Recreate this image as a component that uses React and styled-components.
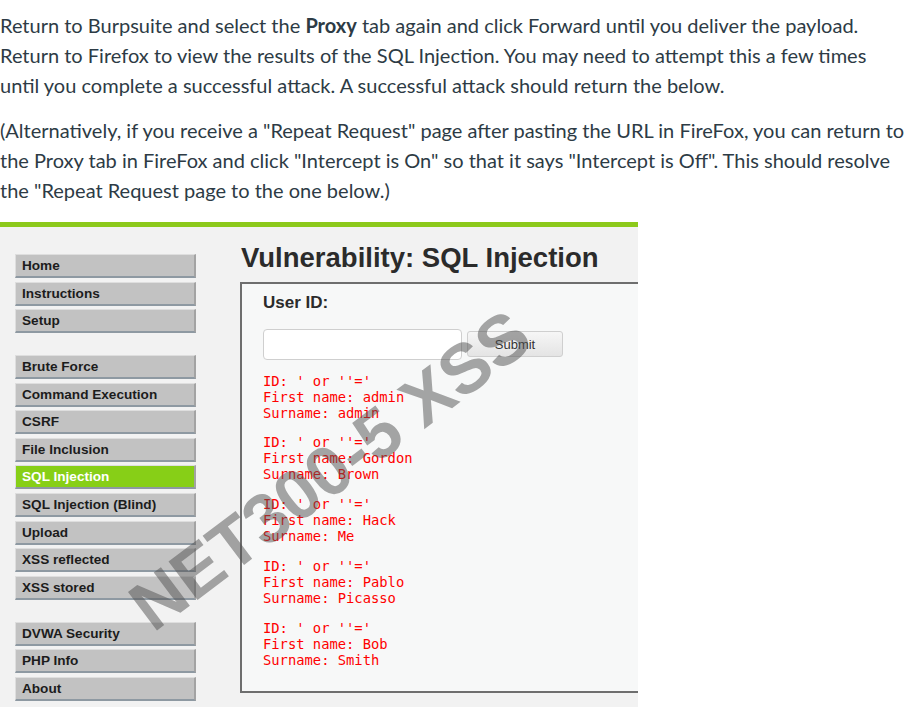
import React from 'react'
import styled, { createGlobalStyle } from 'styled-components';

const GlobalStyle = createGlobalStyle`
    html, body {
        margin: 0;
        padding: 0;
        background: #fff;
    }
`;

const topMenu = ['Home', 'Instructions', 'Setup'];
const attackMenu = [
    'Brute Force',
    'Command Execution',
    'CSRF',
    'File Inclusion',
    'SQL Injection',
    'SQL Injection (Blind)',
    'Upload',
    'XSS reflected',
    'XSS stored',
];
const bottomMenu = ['DVWA Security', 'PHP Info', 'About'];

const results = [
    ['admin', 'admin'],
    ['Gordon', 'Brown'],
    ['Hack', 'Me'],
    ['Pablo', 'Picasso'],
    ['Bob', 'Smith'],
];

function App() {
    return (
        <PageStyled>
            <GlobalStyle />
            <div className="copy">
                <p>
                    Return to Burpsuite and select the <strong>Proxy</strong> tab again and click Forward until you deliver the payload.<br />
                    Return to Firefox to view the results of the SQL Injection. You may need to attempt this a few times<br />
                    until you complete a successful attack. A successful attack should return the below.
                </p>
                <p>
                    (Alternatively, if you receive a "Repeat Request" page after pasting the URL in FireFox, you can return to<br />
                    the Proxy tab in FireFox and click "Intercept is On" so that it says "Intercept is Off". This should resolve<br />
                    the "Repeat Request page to the one below.)
                </p>
            </div>

            <Screenshot>
                <Menu>
                    <MenuGroup>
                        {topMenu.map((item) => <MenuItem key={item}>{item}</MenuItem>)}
                    </MenuGroup>
                    <MenuGroup>
                        {attackMenu.map((item) => (
                            <MenuItem key={item} $active={item === 'SQL Injection'}>{item}</MenuItem>
                        ))}
                    </MenuGroup>
                    <MenuGroup>
                        {bottomMenu.map((item) => <MenuItem key={item}>{item}</MenuItem>)}
                    </MenuGroup>
                </Menu>

                <Main>
                    <h1>Vulnerability: SQL Injection</h1>
                    <VulnBox>
                        <h3>User ID:</h3>
                        <FormRow>
                            <TextInput type="text" />
                            <SubmitButton type="button">Submit</SubmitButton>
                        </FormRow>
                        {results.map(([first, last]) => (
                            <Result key={first}>
{`ID: ' or ''='
First name: ${first}
Surname: ${last}`}
                            </Result>
                        ))}
                    </VulnBox>
                </Main>

                <Watermark>NET300-5 XSS</Watermark>
            </Screenshot>
        </PageStyled>
    )
}

const PageStyled = styled.div`
    width: 912px;
    height: 707px;
    overflow: hidden;

    .copy{
        padding: 10px 0 2px 0;
        font-family: Lato, "Noto Sans", sans-serif;
        font-size: 20px;
        line-height: 30px;
        color: #2d3b45;
        white-space: nowrap;

        p{
            margin: 0 0 15px 0;
        }
        strong{
            font-weight: 700;
        }
    }
`;

const Screenshot = styled.div`
    position: relative;
    width: 638px;
    height: 480px;
    border-top: 5px solid #8cc91b;
    background: #f2f2f2;
    display: flex;
    overflow: hidden;
    font-family: "Liberation Sans", Arial, sans-serif;
`;

const Menu = styled.ul`
    list-style: none;
    margin: 0 0 0 15px;
    padding: 27px 0 0 0;
    width: 181px;
    flex-shrink: 0;
    display: flex;
    flex-direction: column;
    gap: 21.8px;
`;

const MenuGroup = styled.div`
    display: flex;
    flex-direction: column;
    gap: 3.6px;
`;

const MenuItem = styled.li`
    box-sizing: border-box;
    height: 24px;
    padding-left: 6px;
    border-style: solid;
    border-width: 1px 2px 2px 1px;
    border-color: #dedede #a3a3a3 #8e99a2 #dedede;
    background: ${(p) => (p.$active ? '#87cf17' : '#c2c2c2')};
    color: ${(p) => (p.$active ? '#fff' : '#1c1c1c')};
    font-size: 13.6px;
    font-weight: 700;
    line-height: 21px;
    white-space: nowrap;
`;

const Main = styled.div`
    margin-left: 44px;
    padding-top: 13.5px;
    flex-shrink: 0;

    h1{
        margin: 0 0 8.5px 0;
        padding-left: 1px;
        font-size: 27.5px;
        line-height: 33px;
        font-weight: 700;
        color: #2b2b2b;
    }
`;

const VulnBox = styled.div`
    width: 430px;
    padding: 9px 21px 23px 21px;
    border: 2px solid #6e6e6e;
    background: #f7f8f8;

    h3{
        margin: 0;
        font-size: 17px;
        line-height: 20px;
        font-weight: 700;
        color: #2b2b2b;
    }
`;

const FormRow = styled.div`
    display: flex;
    align-items: center;
    margin: 15.5px 0 13px 0;
`;

const TextInput = styled.input`
    box-sizing: border-box;
    width: 199px;
    height: 31px;
    margin: 0;
    border: 1px solid #cfcfcf;
    border-radius: 4px;
    background: #fff;
`;

const SubmitButton = styled.button`
    box-sizing: border-box;
    width: 96px;
    height: 26px;
    margin-left: 5px;
    border: 1px solid #cfcfcf;
    border-radius: 3px;
    background: linear-gradient(#f6f6f6, #e4e4e4);
    font-family: "Liberation Sans", Arial, sans-serif;
    font-size: 13px;
    color: #333;
`;

const Result = styled.pre`
    margin: 0 0 13.75px 0;
    font-family: "DejaVu Sans Mono", monospace;
    font-size: 13.8px;
    line-height: 16px;
    color: #ff0000;

    &:last-child{
        margin-bottom: 0;
    }
`;

const Watermark = styled.div`
    position: absolute;
    left: 330px;
    top: 243px;
    transform: translate(-50%, -50%) rotate(-37deg);
    font-size: 70px;
    font-weight: 700;
    color: rgba(80, 80, 80, 0.5);
    white-space: nowrap;
    pointer-events: none;
`;

export default App;
